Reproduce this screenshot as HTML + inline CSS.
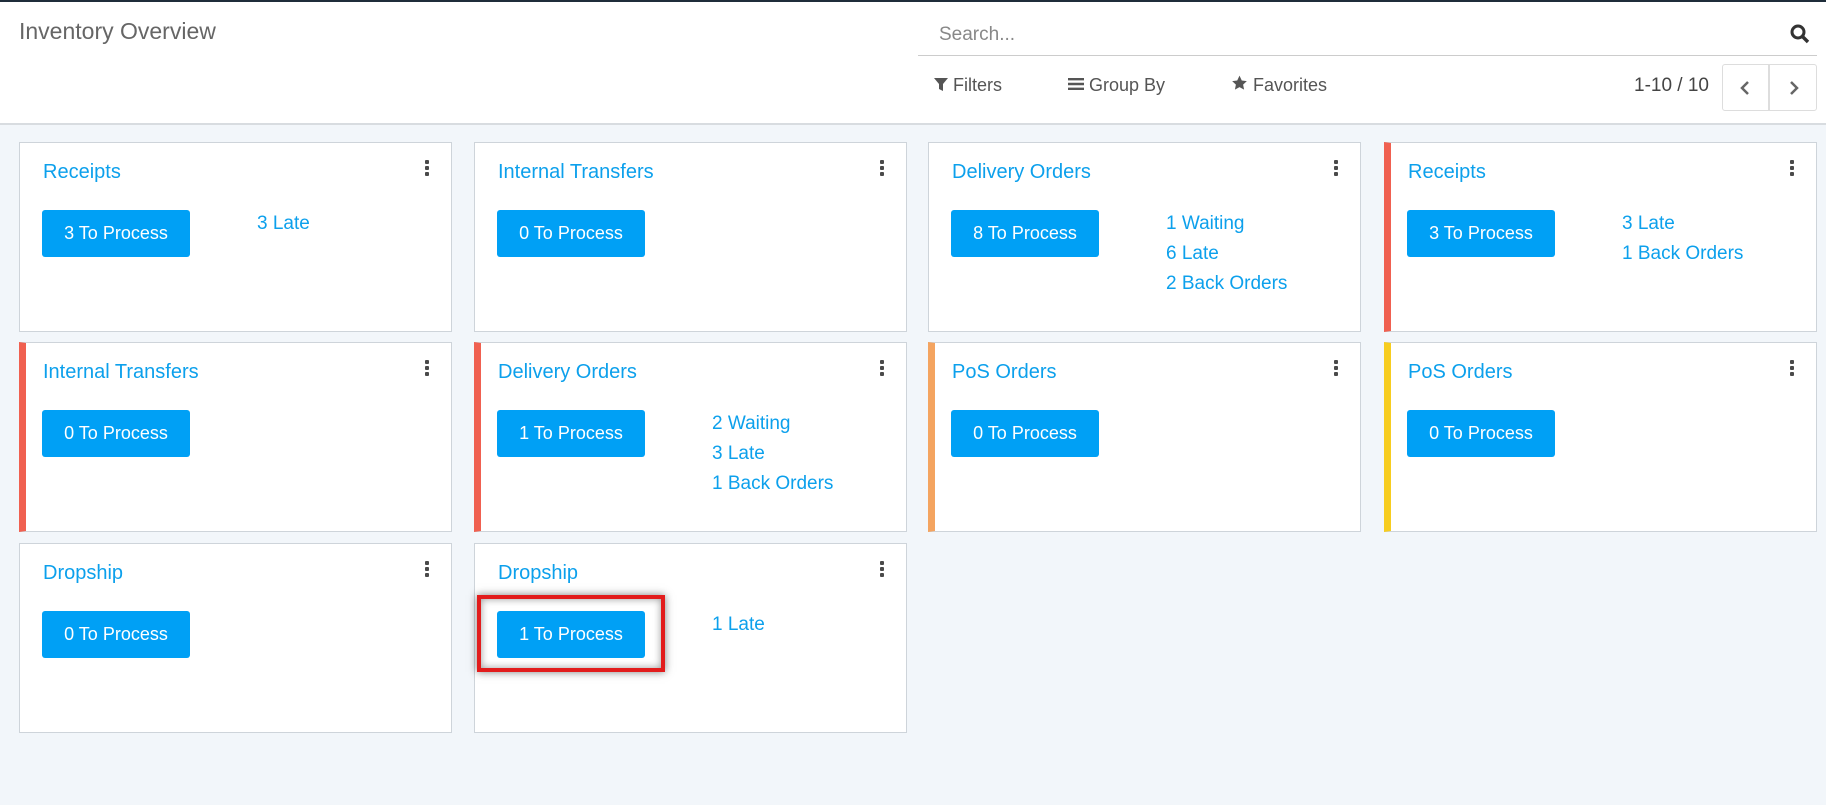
<!DOCTYPE html>
<html><head><meta charset="utf-8"><style>
*{box-sizing:border-box;margin:0;padding:0}
body{width:1826px;height:805px;background:#f2f6fa;font-family:"Liberation Sans",sans-serif;position:relative;overflow:hidden}
.hdr{position:absolute;left:0;top:0;width:1826px;height:125px;background:#fff;border-top:2px solid #1f2d3a;border-bottom:2px solid #d8dce0}
.abs{position:absolute;white-space:nowrap}
.card{position:absolute;width:433px;height:190px;background:#fff;border:1px solid #ced4da}
.card.r{border-left:7px solid #f06050}.card.o{border-left:7px solid #f4a460}.card.y{border-left:7px solid #f7cd1f}
.t{position:absolute;left:23px;top:18px;font-size:20px;color:#0ca0ec}
.card.r .t,.card.o .t,.card.y .t{left:17px}
.dots{position:absolute;left:405px;top:17px;width:4px}
.dots i{display:block;width:4px;height:4px;background:#4a4a4a;margin-bottom:2px;border-radius:1px}
.card.r .dots,.card.o .dots,.card.y .dots{left:399px}
.btn{position:absolute;left:22px;top:67px;width:148px;height:47px;background:#00a0f5;color:#fff;font-size:18px;line-height:47px;text-align:center;border-radius:3px}
.card.r .btn,.card.o .btn,.card.y .btn{left:16px}
.lk{position:absolute;left:237px;top:66px;font-size:19px;line-height:30px;color:#0ca0ec}
.card.r .lk{left:231px}
.tb{font-size:18px;color:#555;top:75px}
</style></head><body>
<div class="hdr"></div>
<div class="abs" style="left:19px;top:18px;font-size:23px;color:#666">Inventory Overview</div>
<div class="abs" style="left:939px;top:24px;font-size:19px;color:#888">Search...</div>
<svg class="abs" style="left:1790px;top:24px" width="20" height="20" viewBox="0 0 20 20"><circle cx="8" cy="8" r="6" fill="none" stroke="#333" stroke-width="3"/><path d="M12.5 12.5L18 18" stroke="#333" stroke-width="3.4"/></svg>
<div class="abs" style="left:918px;top:55px;width:899px;height:1px;background:#ccc"></div>
<div class="abs tb" style="left:934px"><svg width="14" height="14" viewBox="0 0 14 14"><path d="M0 1h14L9 7v7L5 12V7z" fill="#555"/></svg> Filters</div>
<div class="abs tb" style="left:1068px"><svg width="16" height="14" viewBox="0 0 16 14"><path d="M0 1h16v2.4H0zM0 5.8h16v2.4H0zM0 10.6h16v2.4H0z" fill="#555"/></svg> Group By</div>
<div class="abs tb" style="left:1231px"><svg width="17" height="16" viewBox="0 0 24 24"><path d="M12 1l3.4 7.2 7.6.9-5.6 5.3 1.5 7.6L12 18.2 5.1 22l1.5-7.6L1 9.1l7.6-.9z" fill="#555"/></svg> Favorites</div>
<div class="abs" style="left:1634px;top:75px;font-size:19px;color:#444">1-10 / 10</div>
<div class="abs" style="left:1722px;top:64px;width:47px;height:47px;border:1px solid #ddd;border-radius:3px 0 0 3px"><svg style="position:absolute;left:16px;top:15px" width="12" height="16"><path d="M9 2L3 8l6 6" stroke="#666" stroke-width="2.5" fill="none"/></svg></div>
<div class="abs" style="left:1769px;top:64px;width:48px;height:47px;border:1px solid #ddd;border-radius:0 3px 3px 0"><svg style="position:absolute;left:18px;top:15px" width="12" height="16"><path d="M3 2l6 6-6 6" stroke="#666" stroke-width="2.5" fill="none"/></svg></div>

<div class="card" style="left:19px;top:142px"><div class="t">Receipts</div><div class="dots"><i></i><i></i><i></i></div><div class="btn">3 To Process</div><div class="lk">3 Late</div></div>
<div class="card" style="left:474px;top:142px"><div class="t">Internal Transfers</div><div class="dots"><i></i><i></i><i></i></div><div class="btn">0 To Process</div></div>
<div class="card" style="left:928px;top:142px"><div class="t">Delivery Orders</div><div class="dots"><i></i><i></i><i></i></div><div class="btn">8 To Process</div><div class="lk">1 Waiting<br>6 Late<br>2 Back Orders</div></div>
<div class="card r" style="left:1384px;top:142px"><div class="t">Receipts</div><div class="dots"><i></i><i></i><i></i></div><div class="btn">3 To Process</div><div class="lk">3 Late<br>1 Back Orders</div></div>

<div class="card r" style="left:19px;top:342px"><div class="t">Internal Transfers</div><div class="dots"><i></i><i></i><i></i></div><div class="btn">0 To Process</div></div>
<div class="card r" style="left:474px;top:342px"><div class="t">Delivery Orders</div><div class="dots"><i></i><i></i><i></i></div><div class="btn">1 To Process</div><div class="lk">2 Waiting<br>3 Late<br>1 Back Orders</div></div>
<div class="card o" style="left:928px;top:342px"><div class="t">PoS Orders</div><div class="dots"><i></i><i></i><i></i></div><div class="btn">0 To Process</div></div>
<div class="card y" style="left:1384px;top:342px"><div class="t">PoS Orders</div><div class="dots"><i></i><i></i><i></i></div><div class="btn">0 To Process</div></div>

<div class="card" style="left:19px;top:543px"><div class="t">Dropship</div><div class="dots"><i></i><i></i><i></i></div><div class="btn">0 To Process</div></div>
<div class="card" style="left:474px;top:543px"><div class="t">Dropship</div><div class="dots"><i></i><i></i><i></i></div><div class="btn">1 To Process</div><div class="lk">1 Late</div></div>
<div class="abs" style="left:477px;top:595px;width:188px;height:77px;border:4px solid #e21c1c;box-shadow:0 0 8px rgba(0,0,0,.5), inset 0 0 8px rgba(0,0,0,.4)"></div>
</body></html>
